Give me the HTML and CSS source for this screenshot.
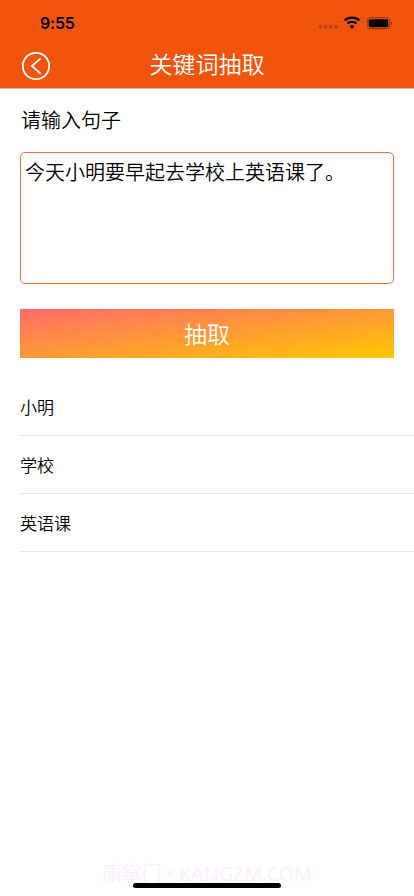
FILE: index.html
```html
<!DOCTYPE html>
<html lang="zh-CN">
<head>
<meta charset="utf-8">
<meta name="viewport" content="width=device-width, initial-scale=1">
<title>关键词抽取</title>
<link rel="stylesheet" href="styles.css">
</head>
<body>
<div class="screen">
  <header class="header">
    <div class="status">
      <span class="time">9:55</span>
      <svg class="indicators" width="74" height="16" viewBox="0 0 74 16">
        <g fill="#b9430c">
          <rect x="1" y="10" width="3.4" height="3.4" rx="1"/>
          <rect x="6" y="10" width="3.4" height="3.4" rx="1"/>
          <rect x="11" y="10" width="3.4" height="3.4" rx="1"/>
          <rect x="16" y="10" width="3.4" height="3.4" rx="1"/>
        </g>
        <g fill="none" stroke="#000" stroke-width="2.1">
          <path d="M26.6 5.6a10.6 10.6 0 0 1 14.8 0"/>
          <path d="M29.4 8.6a6.6 6.6 0 0 1 9.2 0"/>
        </g>
        <path d="M31.4 11.2a3.8 3.8 0 0 1 5.2 0L34 14z"/>
        <rect x="49.2" y="2.7" width="22.6" height="11" rx="3" fill="none" stroke="#8d330b"/>
        <rect x="50.7" y="4.2" width="19.6" height="8" rx="1.6"/>
        <path d="M72.9 6.4v3.8q1.3-.5 1.3-1.9t-1.3-1.9" fill="#8d330b"/>
      </svg>
    </div>
    <div class="navbar">
      <svg class="back" width="30" height="30" viewBox="0 0 30 30" fill="none" stroke="#fff">
        <circle cx="15" cy="15" r="13.2" stroke-width="1.8"/>
        <path d="M19.6 7.4L11 15l8.6 7.6" stroke-width="1.9"/>
      </svg>
      <h1 class="title">关键词抽取</h1>
    </div>
  </header>
  <main class="content">
    <div class="label">请输入句子</div>
    <div class="input">今天小明要早起去学校上英语课了。</div>
    <div class="button">抽取</div>
    <ul class="list">
      <li>小明</li>
      <li>学校</li>
      <li>英语课</li>
    </ul>
  </main>
  <footer class="footer">
    <div class="watermark">康掌门 • KANGZM.COM</div>
    <div class="home-bar"></div>
  </footer>
</div>
</body>
</html>
```
FILE: styles.css
```css
* { box-sizing: border-box; margin: 0; padding: 0; }
body {
  background: #fff;
  color: #000;
  font-family: "Noto Sans CJK SC", sans-serif;
  font-weight: 350;
}
.screen {
  width: 414px;
  height: 896px;
  display: flex;
  flex-direction: column;
  overflow: hidden;
  position: relative;
}
.header {
  height: 89px;
  background: #f1550d;
  border-bottom: 1px solid #e9b9a0;
}
.status {
  height: 44px;
  display: flex;
  justify-content: space-between;
  padding: 14px 22px 0 40px;
}
.time {
  font: 600 16px/19px Inter, sans-serif;
  letter-spacing: -0.2px;
}
.indicators { margin-top: 1px; }
.navbar {
  height: 44px;
  display: grid;
  grid-template-columns: 30px 1fr 30px;
  align-items: center;
  padding: 0 21px;
}
.title {
  color: #fff;
  font-size: 23px;
  font-weight: 350;
  line-height: 34px;
  text-align: center;
  margin-top: -6px;
}
.content { padding: 16px 0 0 20px; }
.label {
  font-size: 20px;
  line-height: 30px;
  padding-left: 1px;
}
.input {
  width: 374px;
  height: 132px;
  margin-top: 17px;
  padding: 4px;
  border: 1px solid #f5713a;
  border-radius: 5px;
  font-size: 20px;
  line-height: 30px;
}
.button {
  width: 374px;
  height: 49px;
  margin-top: 25px;
  background: linear-gradient(to bottom right, #ff6b6b, #ffc800);
  color: #fff;
  font-size: 23px;
  line-height: 49px;
  text-align: center;
}
.list {
  margin-top: 20px;
  list-style: none;
}
.list li {
  height: 58px;
  border-bottom: 1px solid #e8e8e8;
  font-size: 17px;
  line-height: 58px;
}
.footer { margin-top: auto; }
.watermark {
  color: #fdeefa;
  font-family: "Noto Sans", "Noto Sans CJK SC", sans-serif;
  font-size: 20px;
  font-weight: 400;
  line-height: 30px;
  letter-spacing: -0.2px;
  text-align: center;
  padding-bottom: 7px;
}
.home-bar {
  position: absolute;
  left: 133px;
  bottom: 8px;
  width: 148px;
  height: 5px;
  border-radius: 3px;
  background: #000;
}
```
